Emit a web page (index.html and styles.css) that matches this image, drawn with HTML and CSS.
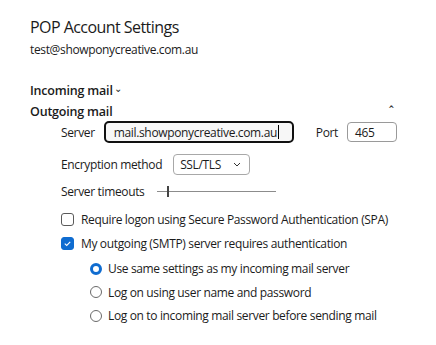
FILE: index.html
```html
<!DOCTYPE html>
<html>
<head>
<meta charset="utf-8">
<link rel="stylesheet" href="styles.css">
</head>
<body>
<div class="page">
  <h1 class="title">POP Account Settings</h1>
  <div class="email">test@showponycreative.com.au</div>

  <div class="section-head incoming">Incoming mail <span class="chev">&#x2304;</span></div>
  <div class="section-head outgoing"><span>Outgoing mail</span><span class="caret">&#x2C6;</span></div>

  <div class="fields">
    <div class="row server-row">
      <span class="label">Server</span>
      <span class="input server-input">mail.showponycreative.com.au<span class="cursor"></span></span>
      <span class="label port-label">Port</span>
      <span class="input port-input">465</span>
    </div>
    <div class="row enc-row">
      <span class="label">Encryption method</span>
      <span class="select">SSL/TLS <svg class="sel-chev" width="8" height="5" viewBox="0 0 8 5"><path d="M1 1 L4 4 L7 1" fill="none" stroke="#333" stroke-width="1"/></svg></span>
    </div>
    <div class="row timeout-row">
      <span class="label">Server timeouts</span>
      <span class="slider"><span class="thumb"></span></span>
    </div>

    <div class="check-row first">
      <span class="checkbox"></span>
      <span>Require logon using Secure Password Authentication (SPA)</span>
    </div>
    <div class="check-row">
      <span class="checkbox checked"><svg width="14" height="14" viewBox="0 0 14 14"><path d="M3.5 7.2 L6 9.5 L10.5 4.8" fill="none" stroke="#fff" stroke-width="1.4"/></svg></span>
      <span>My outgoing (SMTP) server requires authentication</span>
    </div>

    <div class="radios">
      <div class="radio-row"><span class="radio selected"></span><span>Use same settings as my incoming mail server</span></div>
      <div class="radio-row"><span class="radio"></span><span>Log on using user name and password</span></div>
      <div class="radio-row"><span class="radio"></span><span>Log on to incoming mail server before sending mail</span></div>
    </div>
  </div>
</div>
</body>
</html>
```

FILE: styles.css
```css
html, body {
  margin: 0;
  padding: 0;
  background: #ffffff;
}
body {
  font-family: "Open Sans", "Noto Sans", sans-serif;
  color: #1b1b1b;
  font-size: 12px;
  letter-spacing: -0.35px;
}
.page {
  width: 436px;
  height: 345px;
  padding: 16px 0 0 30px;
  box-sizing: border-box;
}
.title {
  margin: 0;
  font-size: 16px;
  font-weight: 400;
  line-height: 22px;
  letter-spacing: -0.55px;
}
.email {
  margin-top: 3px;
  line-height: 18px;
}
.section-head {
  font-weight: 600;
  line-height: 18px;
  font-size: 12.5px;
  letter-spacing: -0.2px;
}
.incoming {
  margin-top: 23px;
  display: flex;
  align-items: center;
  gap: 1px;
}
.chev {
  font-size: 10px;
  font-weight: 400;
  position: relative;
  top: -3px;
}
.outgoing {
  margin-top: 3px;
  display: flex;
  justify-content: space-between;
  width: 364px;
  height: 18px;
}
.caret {
  font-weight: 400;
  font-size: 14px;
  line-height: 18px;
}
.fields {
  padding-left: 31px;
}
.row {
  display: flex;
  align-items: center;
}
.server-row {
  margin-top: 0;
  height: 22px;
}
.label {
  white-space: nowrap;
}
.input {
  display: inline-flex;
  align-items: center;
  height: 20px;
  box-sizing: border-box;
  border: 1px solid #8a8a8a;
  border-radius: 4px;
  padding: 0 7px;
}
.server-input {
  margin-left: 9px;
  width: 190px;
  height: 22px;
  border: 2px solid #111;
  border-radius: 5px;
  background: #f7f7f7;
  padding-left: 8px;
}
.cursor {
  display: inline-block;
  width: 1px;
  height: 14px;
  background: #000;
  margin-left: 1px;
}
.port-label {
  margin-left: 22px;
}
.port-input {
  margin-left: 9px;
  width: 50px;
  border-color: #9a9a9a;
}
.enc-row {
  margin-top: 10px;
  height: 22px;
}
.select {
  margin-left: 11px;
  width: 77px;
  height: 21px;
  box-sizing: border-box;
  border: 1px solid #a8a8a8;
  border-radius: 4px;
  display: flex;
  align-items: center;
  justify-content: space-between;
  padding: 0 8px 0 6px;
}
.timeout-row {
  margin-top: 5px;
  height: 22px;
}
.slider {
  margin-left: 13px;
  width: 119px;
  height: 1px;
  background: #8c8c8c;
  position: relative;
}
.thumb {
  position: absolute;
  left: 10px;
  top: -5px;
  width: 2px;
  height: 11px;
  background: #444;
}
.check-row {
  display: flex;
  align-items: center;
  gap: 7px;
  height: 24px;
}
.check-row.first {
  margin-top: 5px;
}
.checkbox {
  width: 13px;
  height: 13px;
  box-sizing: border-box;
  border: 1px solid #5a5a5a;
  border-radius: 3px;
  display: flex;
  align-items: center;
  justify-content: center;
}
.checkbox.checked {
  background: #0f6cd0;
  border-color: #0f6cd0;
}
.checkbox svg {
  width: 13px;
  height: 13px;
}
.radios {
  padding-left: 29px;
  margin-top: 2px;
}
.radio-row {
  display: flex;
  align-items: center;
  gap: 6px;
  height: 23.5px;
}
.radio {
  width: 12px;
  height: 12px;
  box-sizing: border-box;
  border: 1px solid #6a6a6a;
  border-radius: 50%;
}
.radio.selected {
  border: 3.5px solid #0f6cd0;
}
```
